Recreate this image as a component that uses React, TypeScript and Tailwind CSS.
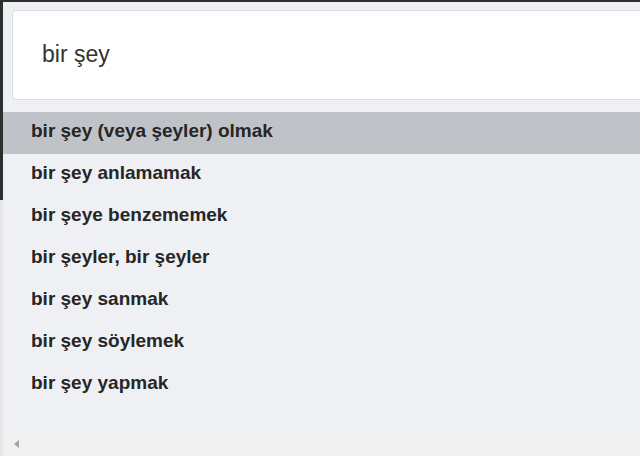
import React from "react";

const items = [
  "bir şey (veya şeyler) olmak",
  "bir şey anlamamak",
  "bir şeye benzememek",
  "bir şeyler, bir şeyler",
  "bir şey sanmak",
  "bir şey söylemek",
  "bir şey yapmak",
];

export default function App() {
  return (
    <div className="w-[640px] h-[456px] overflow-hidden bg-[#2c302c] flex flex-col" style={{ fontFamily: '"Liberation Sans", Arial, sans-serif' }}>
      <div className="h-[2px] shrink-0" />
      <div className="flex-1 flex min-h-0">
        <div className="w-[3px] shrink-0 flex flex-col">
          <div className="h-[198px] bg-[#2c302c]" />
          <div className="flex-1 bg-[#e6e6e6]" />
        </div>
        <div className="flex-1 flex flex-col bg-[#eef0f4] min-w-0">
          <div className="pl-[9px] pt-[8px] pb-[12px]">
            <div className="h-[90px] bg-white rounded-l-[4px] border border-r-0 border-[#dcdde2] flex items-center pl-[29px]">
              <span className="text-[23px] text-[#333333] leading-none pb-[2px]">bir şey</span>
            </div>
          </div>
          <div className="flex flex-col">
            {items.map((t, i) => (
              <div
                key={t}
                className={
                  "h-[42px] flex items-center pl-[28px] pb-[3px] text-[19px] font-bold text-[#262626] " +
                  (i === 0 ? "bg-[#bfc3c7]" : "")
                }
              >
                {t}
              </div>
            ))}
          </div>
          <div className="flex-1" />
          <div className="h-[24px] bg-[#f1f1f1] flex items-center pl-[10px] shrink-0">
            <svg width="8" height="10" viewBox="0 0 8 10">
              <polygon points="6,1 1,5 6,9" fill="#a3a3a3" />
            </svg>
          </div>
        </div>
      </div>
    </div>
  );
}
